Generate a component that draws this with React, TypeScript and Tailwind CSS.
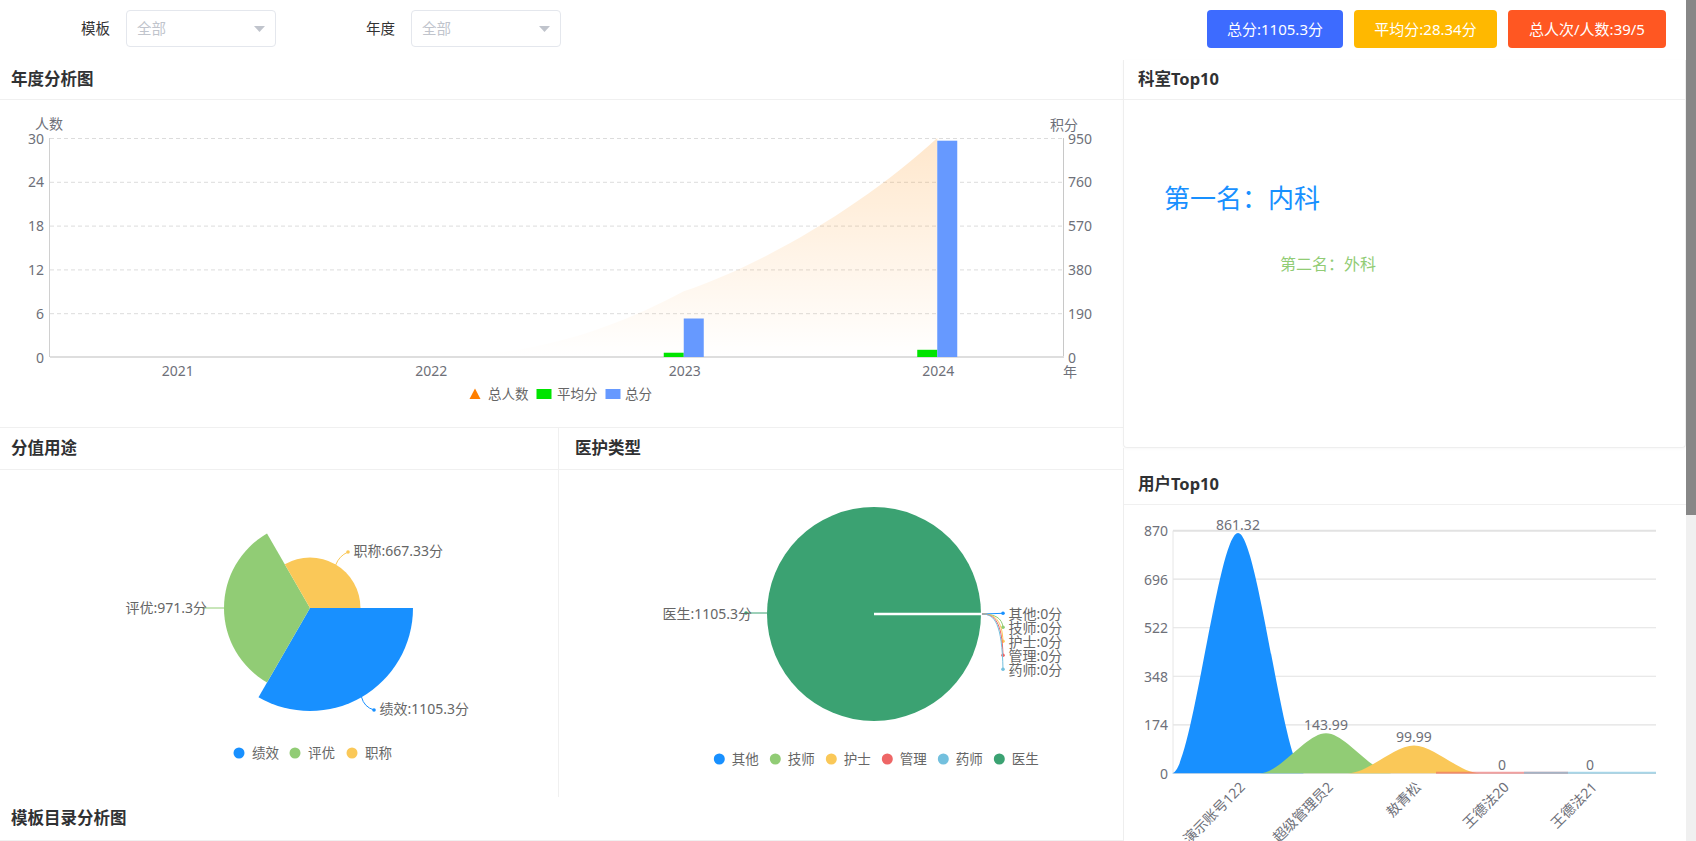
import React from "react";

// 颜色
const AXIS = "#6e7079";
const LABEL = "#666";

const CardHeader = ({ title, className = "" }: { title: string; className?: string }) => {
  return (
    <div
      className={`flex shrink-0 items-center border-b border-[#f0f0f0] text-[16.5px] font-bold text-[#303133] ${className}`}
    >
      {title}
    </div>
  );
};

const Select = ({ className = "" }: { className?: string }) => (
  <div
    className={`flex h-[37px] w-[150px] items-center justify-between rounded-[4px] border border-[#e4e7ed] px-[10px] ${className}`}
  >
    <span className="text-[14.5px] text-[#c0c4cc]">全部</span>
    <svg width="11" height="6" viewBox="0 0 11 6">
      <path d="M0 0 H11 L5.5 6 Z" fill="#c0c4cc" />
    </svg>
  </div>
);

const YearChart = () => {
  const top = 38;
  const bottom = 257;
  const left = 50;
  const right = 1064;
  const ticksL = [30, 24, 18, 12, 6, 0];
  const ticksR = [950, 760, 570, 380, 190, 0];
  const ys = ticksL.map((_, i) => top + ((bottom - top) * i) / 5);
  const cw = (right - left) / 4;
  const years = ["2021", "2022", "2023", "2024"];
  const cx = years.map((_, i) => left + cw * (i + 0.5));
  const sc = (v: number) => ((bottom - top) * v) / 950;
  const avg = [0, 0, 18.56, 31.28];
  const total = [0, 0, 167, 938.3];
  const y2023 = bottom - (9 / 30) * (bottom - top);

  const area = `M ${cx[0]} ${bottom} L ${cx[1]} ${bottom} C ${cx[1] + 110} ${bottom}, ${cx[2] - 64} ${y2023 + 34}, ${cx[2]} ${y2023} C ${cx[2] + 86} ${y2023 - 29}, ${cx[3] - 67} ${top + 62}, ${cx[3]} ${top} L ${cx[3]} ${bottom} Z`;

  return (
    <svg width="1123" height="327" className="block">
      <defs>
        <linearGradient id="peopleArea" x1="0" y1="0" x2="0" y2="1">
          <stop offset="0" stopColor="#ff8800" stopOpacity="0.2" />
          <stop offset="1" stopColor="#ff8800" stopOpacity="0" />
        </linearGradient>
      </defs>
      {/* 网格 */}
      {ys.slice(0, 5).map((y) => (
        <line key={y} x1={left} x2={right} y1={y + 0.5} y2={y + 0.5} stroke="#dcdcdc" strokeDasharray="4 3" />
      ))}
      <path d={area} fill="url(#peopleArea)" />
      <line x1={left - 0.5} x2={left - 0.5} y1={top} y2={bottom} stroke="#d0d0d0" />
      <line x1={right - 0.5} x2={right - 0.5} y1={top} y2={bottom} stroke="#c8c8c8" />
      <line x1={left} x2={right} y1={bottom} y2={bottom} stroke="#dedede" strokeWidth="2" />

      {/* 柱子 */}
      {cx.map((x, i) => (
        <g key={i}>
          {avg[i] > 0 && <rect x={x - 20} y={bottom - sc(avg[i])} width="20" height={sc(avg[i])} fill="#00e400" />}
          {total[i] > 0 && <rect x={x} y={bottom - sc(total[i])} width="20" height={sc(total[i])} fill="#6699ff" />}
        </g>
      ))}

      <g fontSize="14" fill={AXIS}>
        <text x="49" y="23" textAnchor="middle" dominantBaseline="central">人数</text>
        <text x="1064" y="24" textAnchor="middle" dominantBaseline="central">积分</text>
        {ticksL.map((t, i) => (
          <text key={t} x="44" y={ys[i]} textAnchor="end" dominantBaseline="central">{t}</text>
        ))}
        {ticksR.map((t, i) => (
          <text key={t} x="1068" y={ys[i]} dominantBaseline="central">{t}</text>
        ))}
        {years.map((y, i) => (
          <text key={y} x={cx[i] + 1} y="270" textAnchor="middle" dominantBaseline="central">{y}</text>
        ))}
        <text x="1063" y="271" dominantBaseline="central">年</text>
      </g>

      {/* 图例 */}
      <g fontSize="13.5" fill={LABEL}>
        <polygon points="475,288.5 480.5,299 469.5,299" fill="#ff7f00" />
        <text x="488" y="294" dominantBaseline="central">总人数</text>
        <rect x="536.5" y="289" width="15" height="10" fill="#00e400" />
        <text x="557" y="294" dominantBaseline="central">平均分</text>
        <rect x="605.5" y="289" width="15" height="10" fill="#6699ff" />
        <text x="625" y="294" dominantBaseline="central">总分</text>
      </g>
    </svg>
  );
};

const sector = (cx: number, cy: number, r: number, a0: number, a1: number) => {
  const p = (a: number) => [cx + r * Math.cos((a * Math.PI) / 180), cy + r * Math.sin((a * Math.PI) / 180)];
  const [x0, y0] = p(a0);
  const [x1, y1] = p(a1);
  return `M ${cx} ${cy} L ${x0} ${y0} A ${r} ${r} 0 0 1 ${x1} ${y1} Z`;
};

const UsageChart = () => {
  const c = { x: 310, y: 138 };
  return (
    <svg width="557" height="327" className="block">
      <path d={sector(c.x, c.y, 103, 0, 120)} fill="#1890ff" />
      <path d={sector(c.x, c.y, 86, 120, 240)} fill="#91cc75" />
      <path d={sector(c.x, c.y, 50.5, 240, 360)} fill="#fac858" />

      <path d="M 335.7 95 Q 339 86 348 82" stroke="#fac858" fill="none" />
      <circle cx="348" cy="82" r="1.8" fill="#fac858" />
      <line x1="202" x2="224" y1="138" y2="138" stroke="#91cc75" />
      <path d="M 361.5 227 Q 364 237 374 240" stroke="#1890ff" fill="none" />
      <circle cx="374" cy="240" r="1.8" fill="#1890ff" />

      <g fontSize="14" fill={LABEL}>
        <text x="353.5" y="80" dominantBaseline="central">职称:667.33分</text>
        <text x="207" y="137.5" textAnchor="end" dominantBaseline="central">评优:971.3分</text>
        <text x="379.5" y="238" dominantBaseline="central">绩效:1105.3分</text>
      </g>

      <g fontSize="13.5" fill={LABEL}>
        {[
          { n: "绩效", c: "#1890ff", x: 239 },
          { n: "评优", c: "#91cc75", x: 295 },
          { n: "职称", c: "#fac858", x: 352 },
        ].map((it) => (
          <g key={it.n}>
            <circle cx={it.x} cy="283" r="5.5" fill={it.c} />
            <text x={it.x + 13} y="283" dominantBaseline="central">{it.n}</text>
          </g>
        ))}
      </g>
    </svg>
  );
};

const StaffChart = () => {
  const zero = [
    { n: "其他", c: "#1890ff" },
    { n: "技师", c: "#91cc75" },
    { n: "护士", c: "#fac858" },
    { n: "管理", c: "#ee6666" },
    { n: "药师", c: "#73c0de" },
  ];
  const legend = [...zero, { n: "医生", c: "#3ba272" }];
  return (
    <svg width="564" height="327" className="block">
      <circle cx="315" cy="144" r="107" fill="#3ba272" />
      <line x1="315" x2="422" y1="144" y2="144" stroke="#fff" strokeWidth="2.5" />

      <line x1="186" x2="208" y1="143" y2="143" stroke="#3ba272" />
      <circle cx="187" cy="143" r="1.8" fill="#3ba272" />

      {zero.map((z, i) => {
        const y = 143.3 + i * 14;
        return (
          <g key={z.n}>
            <path d={i === 0 ? `M 423 144 L 444 ${y}` : `M 423 144 C 436 144, 443 ${146 + i * 2}, 444 ${y}`} stroke={z.c} fill="none" />
            <circle cx="444" cy={y} r="1.8" fill={z.c} />
          </g>
        );
      })}

      <g fontSize="14" fill={LABEL}>
        <text x="193" y="143" textAnchor="end" dominantBaseline="central">医生:1105.3分</text>
        {zero.map((z, i) => (
          <text key={z.n} x="449.5" y={143.3 + i * 14} dominantBaseline="central">{z.n}:0分</text>
        ))}
      </g>

      <g fontSize="13.5" fill={LABEL}>
        {legend.map((it, i) => {
          const x = 160.3 + i * 56;
          return (
            <g key={it.n}>
              <circle cx={x} cy="289" r="5.5" fill={it.c} />
              <text x={x + 12.5} y="289" dominantBaseline="central">{it.n}</text>
            </g>
          );
        })}
      </g>
    </svg>
  );
};

const UserChart = () => {
  const left = 49;
  const right = 532;
  const top = 25.7;
  const base = 268.3;
  const ticks = [870, 696, 522, 348, 174, 0];
  const ys = ticks.map((_, i) => top + ((base - top) * i) / 5);
  const users = [
    { n: "演示账号122", v: 861.32, c: "#1890ff", label: "861.32" },
    { n: "超级管理员2", v: 143.99, c: "#91cc75", label: "143.99" },
    { n: "敖青松", v: 99.99, c: "#fac858", label: "99.99" },
    { n: "王德法20", v: 0, c: "#ee6666", label: "0" },
    { n: "王德法21", v: 0, c: "#73c0de", label: "0" },
  ];
  const hw = 66;

  const hump = (cx: number, yt: number) =>
    `M ${cx - hw} ${base} C ${cx - hw + 20} ${base}, ${cx - hw + 46} ${yt}, ${cx} ${yt} C ${cx + 20} ${yt}, ${cx + 46} ${base}, ${cx + hw} ${base} Z`;

  return (
    <svg width="562" height="336" className="block">
      {ys.map((y, i) => (
        <line key={i} x1={left} x2={right} y1={y} y2={y} stroke="#e2e2e2" strokeWidth={i === 0 ? 2 : 1.2} />
      ))}
      <line x1={left} x2={left} y1={top} y2={base} stroke="#e6e6e6" />

      {users.map((u, i) => {
        const cx = 114 + i * 88;
        const yt = base - (u.v / 870) * (base - top);
        return u.v > 0 ? (
          <path key={u.n} d={hump(cx, yt)} fill={u.c} />
        ) : (
          <line key={u.n} x1={cx - hw} x2={cx + hw} y1={base - 0.5} y2={base - 0.5} stroke={u.c} strokeWidth="2" opacity="0.6" />
        );
      })}

      <g fontSize="14" fill={AXIS}>
        {ticks.map((t, i) => (
          <text key={t} x="44" y={ys[i]} textAnchor="end" dominantBaseline="central">{t}</text>
        ))}
        {users.map((u, i) => {
          const cx = 114 + i * 88;
          const yt = base - (u.v / 870) * (base - top);
          return (
            <g key={u.n}>
              <text x={cx} y={yt - 9} textAnchor="middle" dominantBaseline="central">{u.label}</text>
              <text
                x={cx + 4}
                y={base + 11}
                textAnchor="end"
                dominantBaseline="central"
                transform={`rotate(-45 ${cx + 4} ${base + 11})`}
              >
                {u.n}
              </text>
            </g>
          );
        })}
      </g>
    </svg>
  );
};

const App = () => {
  return (
    <div className="flex h-[841px] w-full overflow-hidden bg-white font-['Noto_Sans','Noto_Sans_CJK_SC',sans-serif]">
      <div className="flex min-w-0 flex-1 flex-col overflow-hidden">
        {/* 顶部筛选 */}
        <div className="flex h-[60px] shrink-0 items-start pt-[10px]">
          <div className="flex h-[37px] items-center">
            <span className="w-[110px] text-right text-[14.5px] text-[#333]">模板</span>
            <Select className="ml-[16px]" />
            <span className="ml-[9px] w-[110px] text-right text-[14.5px] text-[#333]">年度</span>
            <Select className="ml-[16px]" />
          </div>
          <div className="ml-auto mr-[20px] flex gap-[11px] text-[15px] text-white">
            <div className="flex h-[38px] w-[136px] items-center justify-center rounded-[4px] bg-[#3d6bff]">总分:1105.3分</div>
            <div className="flex h-[38px] w-[143px] items-center justify-center rounded-[4px] bg-[#ffb800]">平均分:28.34分</div>
            <div className="flex h-[38px] w-[158px] items-center justify-center rounded-[4px] bg-[#ff5722]">总人次/人数:39/5</div>
          </div>
        </div>

        <div className="flex flex-1">
          {/* 左侧 */}
          <div className="flex w-[1123px] shrink-0 flex-col">
            <div className="flex h-[367px] shrink-0 flex-col">
              <CardHeader title="年度分析图" className="h-[40px] pl-[11px]" />
              <YearChart />
            </div>
            <div className="flex h-[370px] shrink-0 border-t border-[#f0f0f0]">
              <div className="flex w-[558px] shrink-0 flex-col">
                <CardHeader title="分值用途" className="h-[42px] pl-[11px]" />
                <UsageChart />
              </div>
              <div className="flex flex-1 flex-col border-l border-[#f0f0f0]">
                <CardHeader title="医护类型" className="h-[42px] pl-[16px]" />
                <StaffChart />
              </div>
            </div>
            <CardHeader title="模板目录分析图" className="h-[44px] pl-[11px]" />
          </div>

          {/* 右侧 */}
          <div className="flex min-w-0 flex-1 flex-col">
            <div className="flex h-[388px] shrink-0 flex-col rounded-b-[4px] border-b border-l border-r border-[#eeeeee] shadow-[0_1px_3px_rgba(0,0,0,0.03)]">
              <CardHeader title="科室Top10" className="h-[40px] pl-[14px]" />
              <div className="flex flex-1 flex-col overflow-hidden">
                <div className="ml-[40px] mt-[83px] text-[26px] leading-[30px] text-[#1890ff]">第一名：内科</div>
                <div className="ml-[156px] mt-[41px] text-[16px] leading-[20px] text-[#91cc75]">第二名：外科</div>
              </div>
            </div>
            <div className="flex flex-1 flex-col border-l border-[#eeeeee] pt-[16px]">
              <CardHeader title="用户Top10" className="h-[41px] pl-[14px]" />
              <UserChart />
            </div>
          </div>
        </div>
      </div>

      {/* 滚动条 */}
      <div className="w-[10px] shrink-0 bg-[#f0f0f0]">
        <div className="h-[515px] bg-[#878787]" />
      </div>
    </div>
  );
};

export default App;
